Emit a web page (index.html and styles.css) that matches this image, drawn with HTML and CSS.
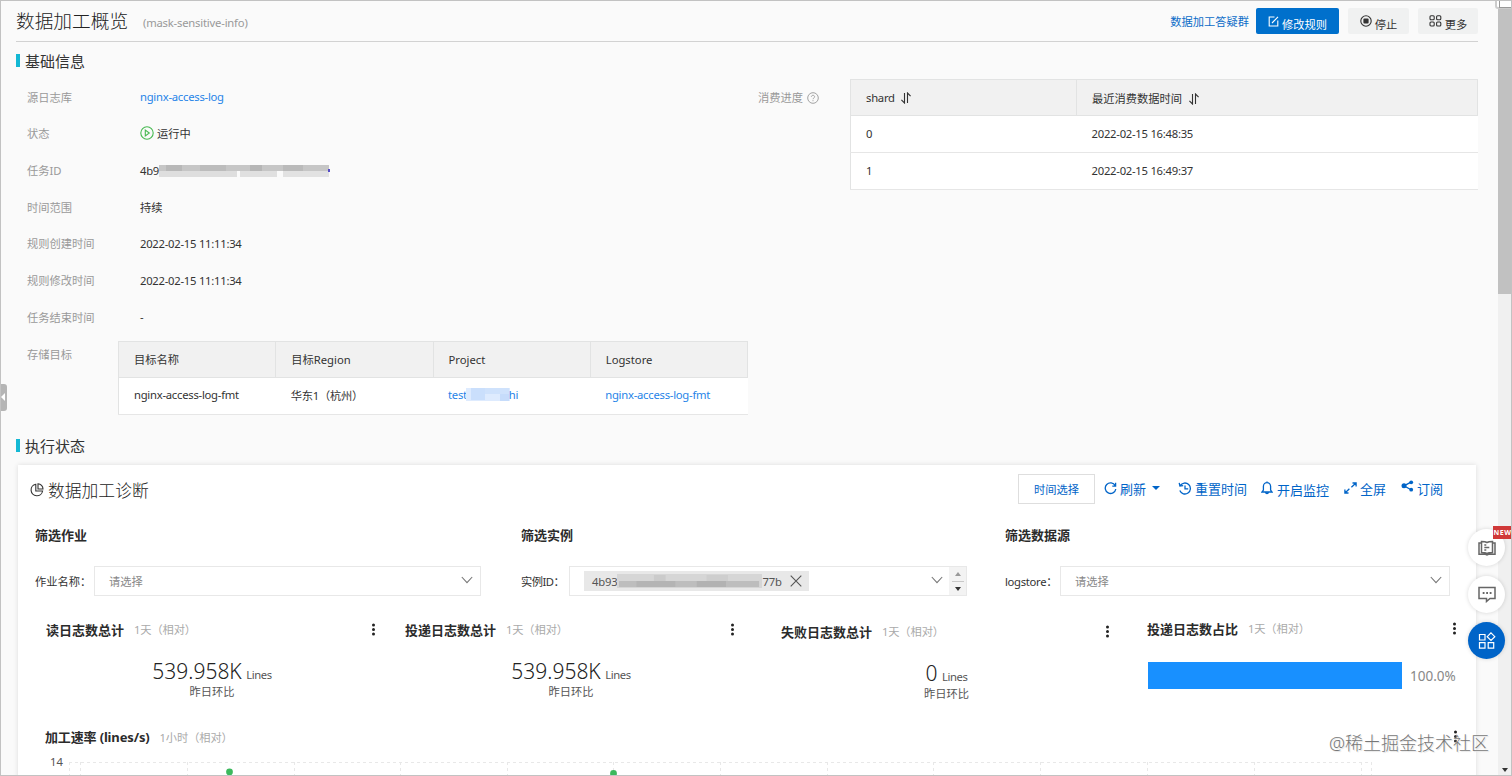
FILE: index.html
```html
<!DOCTYPE html>
<html lang="zh-CN">
<head>
    <meta charset="UTF-8">
    <meta name="viewport" content="width=device-width, initial-scale=1.0">
    <title>数据加工概览</title>
    <link rel="stylesheet" href="styles.css">
</head>
<body>
<div class="window">
    <main class="page">
        <header class="page-header">
            <h1>数据加工概览</h1>
            <span class="job-name">(mask-sensitive-info)</span>
            <a class="help-link">数据加工答疑群</a>
            <button class="btn btn-primary">
                <svg width="11" height="11" viewBox="0 0 11 11"><path d="M6.5 1H1.2v9h8.6V4.5M4 7l6-6.2"/></svg><span>修改规则</span>
            </button>
            <button class="btn btn-stop">
                <svg width="12" height="12" viewBox="0 0 12 12"><circle cx="6" cy="6" r="5.2"/><rect class="solid" x="3.4" y="3.4" width="5.2" height="5.2" rx="1"/></svg><span>停止</span>
            </button>
            <button class="btn btn-more">
                <svg width="13" height="12" viewBox="0 0 13 12"><rect x="1" y=".8" width="4.2" height="4" rx="1"/><rect x="7.6" y=".8" width="4.2" height="4" rx="1"/><rect x="1" y="7" width="4.2" height="4" rx="1"/><rect x="7.6" y="7" width="4.2" height="4" rx="1"/></svg><span>更多</span>
            </button>
        </header>

        <h2 class="section-title">基础信息</h2>
        <div class="info">
            <div class="info-left">
                <div class="info-row"><label>源日志库</label><a class="latin">nginx-access-log</a></div>
                <div class="info-row"><label>状态</label>
                    <svg class="run-icon" width="14" height="14" viewBox="0 0 14 14"><circle cx="7" cy="7" r="6.2"/><path d="M5.3 4v6l4-3z"/></svg><span>运行中</span>
                </div>
                <div class="info-row"><label>任务ID</label><span class="latin">4b9</span>
                    <svg class="mosaic" width="171" height="14" viewBox="0 0 171 14">
                        <rect x="0" y="1" width="170" height="6" fill="#c6c6c6"/>
                        <rect x="7" y="1" width="16" height="6" fill="#b8b8b8"/><rect x="41" y="1" width="26" height="6" fill="#bcbcbc"/><rect x="91" y="1" width="12" height="6" fill="#b6b6b6"/><rect x="124" y="1" width="20" height="6" fill="#bababa"/>
                        <rect x="0" y="7" width="78" height="6" fill="#dedede"/><rect x="81" y="7" width="37" height="6" fill="#e0e0e0"/><rect x="124" y="7" width="46" height="6" fill="#e2e2e2"/>
                        <rect x="169" y="5" width="2" height="3" fill="#554cc8"/>
                    </svg>
                </div>
                <div class="info-row"><label>时间范围</label><span>持续</span></div>
                <div class="info-row"><label>规则创建时间</label><span class="latin">2022-02-15 11:11:34</span></div>
                <div class="info-row"><label>规则修改时间</label><span class="latin">2022-02-15 11:11:34</span></div>
                <div class="info-row"><label>任务结束时间</label><span>-</span></div>
                <div class="info-row target-row"><label>存储目标</label>
                    <table class="table target-table">
                        <tr><th>目标名称</th><th>目标Region</th><th>Project</th><th>Logstore</th></tr>
                        <tr>
                            <td>nginx-access-log-fmt</td><td>华东1（杭州）</td>
                            <td><a class="masked">test<svg width="44" height="13" viewBox="0 0 44 13"><rect width="44" height="13" fill="#deebfe"/><rect x="5" width="14" height="12" fill="#cadffc"/><rect x="19" width="24" height="6" fill="#cfe2fc"/><rect x="34" y="6" width="9" height="7" fill="#c6dcfb"/></svg>hi</a></td>
                            <td><a>nginx-access-log-fmt</a></td>
                        </tr>
                    </table>
                </div>
            </div>
            <div class="info-right">
                <label>消费进度</label>
                <svg class="question" width="12" height="12" viewBox="0 0 12 12"><circle cx="6" cy="6" r="5.3"/><path d="M4.4 4.8c0-2 3.2-2 3.2 0 0 1.2-1.6 1.2-1.6 2.4M6 8.2v1"/></svg>
                <table class="table shard-table">
                    <tr>
                        <th>shard <svg class="sort" width="12" height="12" viewBox="0 0 12 12"><path d="M4.5 1v10L1.4 7.8M7.5 11V1l3.1 3.2"/></svg></th>
                        <th>最近消费数据时间 <svg class="sort" width="12" height="12" viewBox="0 0 12 12"><path d="M4.5 1v10L1.4 7.8M7.5 11V1l3.1 3.2"/></svg></th>
                    </tr>
                    <tr><td>0</td><td>2022-02-15 16:48:35</td></tr>
                    <tr><td>1</td><td>2022-02-15 16:49:37</td></tr>
                </table>
            </div>
        </div>

        <h2 class="section-title status-title">执行状态</h2>
        <section class="card">
            <div class="card-head">
                <svg class="pie" width="14" height="14" viewBox="0 0 14 14"><path d="M5.8 1.3A5.8 5.8 0 1 0 12.6 8H5.8zM8 .8V6h5A5.2 5.2 0 0 0 8 .8z"/></svg>
                <h3>数据加工诊断</h3>
                <button class="time-btn">时间选择</button>
                <a class="tool refresh"><svg width="13" height="13" viewBox="0 0 13 13"><path d="M11.2 3.6A5.3 5.3 0 1 0 11.8 7M11.6.8v3.3H8.3"/></svg>刷新<i class="caret"></i></a>
                <a class="tool reset"><svg width="14" height="13" viewBox="0 0 14 13"><path d="M2.2 3.6A5.5 5.5 0 1 1 1.8 8.6M1.2.9l.7 3.2 3.3-.4M7 3.4v3.5h3.2"/></svg>重置时间</a>
                <a class="tool monitor"><svg width="12" height="14" viewBox="0 0 12 14"><path d="M1 11h10L9.6 9V5.2a3.6 3.6 0 0 0-7.2 0V9zM6 1.4V.4M4.6 11.4c.2 1.6 2.6 1.6 2.8 0"/></svg><span>开启监控</span></a>
                <a class="tool full"><svg width="13" height="12" viewBox="0 0 13 12"><path d="M8.5 1h3.6v3.4M12 1 7.4 5.2M4.5 11H.9V7.6M1 11l4.4-4.2"/></svg>全屏</a>
                <a class="tool subscribe"><svg width="13" height="12" viewBox="0 0 13 12"><path d="m10 2.2-7 3.6 7 4"/><circle class="solid" cx="3" cy="5.8" r="2.5"/><circle class="solid" cx="10.2" cy="2.3" r="1.9"/><circle class="solid" cx="10.2" cy="9.7" r="1.9"/></svg>订阅</a>
            </div>

            <div class="filters">
                <div class="filter">
                    <h4>筛选作业</h4>
                    <div class="field"><label>作业名称：</label>
                        <div class="select"><span>请选择</span><svg class="chev" width="12" height="8" viewBox="0 0 12 8"><path d="m.8 1 5.2 5.6L11.200 1"/></svg></div>
                    </div>
                </div>
                <div class="filter">
                    <h4>筛选实例</h4>
                    <div class="field"><label>实例ID：</label>
                        <div class="select select-tag">
                            <div class="tag"><span>4b93</span>
                                <svg width="145" height="16" viewBox="0 0 149 16" preserveAspectRatio="none">
                                    <rect y="1" width="149" height="14" fill="#d6d6d6"/><rect x="2" y="8" width="144" height="6" fill="#bdbdbd"/><rect x="20" y="8" width="40" height="6" fill="#b4b4b4"/><rect x="38" y="2" width="12" height="6" fill="#cbcbcb"/><rect x="82" y="8" width="30" height="6" fill="#b2b2b2"/><rect x="92" y="2" width="22" height="6" fill="#cecece"/>
                                </svg>
                                <span>77b</span>
                                <svg class="close" width="12" height="12" viewBox="0 0 12 12"><path d="m.7.7 10.600 10.600M11.300.7.7 11.300"/></svg>
                            </div>
                            <svg class="chev" width="12" height="8" viewBox="0 0 12 8"><path d="m.8 1 5.2 5.6L11.200 1"/></svg>
                            <div class="spinner"><i class="up"></i><b></b><i class="down"></i></div>
                        </div>
                    </div>
                </div>
                <div class="filter">
                    <h4>筛选数据源</h4>
                    <div class="field"><label>logstore：</label>
                        <div class="select"><span>请选择</span><svg class="chev" width="12" height="8" viewBox="0 0 12 8"><path d="m.8 1 5.2 5.6L11.200 1"/></svg></div>
                    </div>
                </div>
            </div>

            <div class="metrics">
                <div class="metric">
                    <div class="metric-head"><h4>读日志数总计</h4><span>1天（相对）</span><i class="dots"></i></div>
                    <div class="value">539.958K <small>Lines</small></div>
                    <div class="compare">昨日环比</div>
                </div>
                <div class="metric">
                    <div class="metric-head"><h4>投递日志数总计</h4><span>1天（相对）</span><i class="dots"></i></div>
                    <div class="value">539.958K <small>Lines</small></div>
                    <div class="compare">昨日环比</div>
                </div>
                <div class="metric metric-fail">
                    <div class="metric-head"><h4>失败日志数总计</h4><span>1天（相对）</span><i class="dots"></i></div>
                    <div class="value">0 <small>Lines</small></div>
                    <div class="compare">昨日环比</div>
                </div>
                <div class="metric metric-ratio">
                    <div class="metric-head"><h4>投递日志数占比</h4><span>1天（相对）</span><i class="dots"></i></div>
                    <div class="ratio"><div class="ratio-bar"></div><span>100.0%</span></div>
                </div>
            </div>

            <div class="rate">
                <div class="metric-head"><h4>加工速率 (lines/s)</h4><span>1小时（相对）</span><i class="dots"></i></div>
                <div class="chart">
                    <span>14</span>
                    <svg width="1310" height="28" viewBox="0 0 1310 28">
                        <path class="grid" d="M2 12.500H1305M2.500 12V28M13.500 12V28M120.500 12V28M227.500 12V28M333.500 12V28M440.500 12V28M546.500 12V28M653.500 12V28M760.500 12V28M866.500 12V28M973.500 12V28M1080.500 12V28M1187.500 12V28M1294.500 12V28M1304.500 12V28"/>
                        <circle cx="162.500" cy="22" r="3.400"/><circle cx="546.500" cy="23.500" r="3.400"/>
                    </svg>
                </div>
            </div>
        </section>
    </main>
    <div class="scrollbar"><div class="thumb"></div><i class="down"></i></div>

    <div class="corner"></div>
    <div class="collapse"><i></i></div>
    <div class="float-menu">
        <div class="float-btn">
            <svg width="18" height="16" viewBox="0 0 18 16"><path d="M9 13.500c-1.500-.9-3.500-.9-5.500-.9V1.600c2 0 4 0 5.500.9 1.500-.9 3.500-.9 5.500-.9v11c-2 0-4 0-5.500.9zM3.500 3H1v11.300h6.500L9 15l1.500-.7H17V3h-2.500M6.300 5h2M6.300 7.500h5M6.300 10h2"/></svg>
            <span class="new">NEW</span>
        </div>
        <div class="float-btn">
            <svg width="18" height="17" viewBox="0 0 18 17"><path d="M1 1.500h16v11h-5L8.500 15.500v-3H1z"/><path d="M4.700 7h1.800M8.200 7H10M11.700 7h1.800" stroke-width="2"/></svg>
        </div>
        <div class="float-btn float-active">
            <svg width="18" height="18" viewBox="0 0 18 18"><path d="M1.500 2.500h5.500V8H1.500zM1.500 10.700h5.500v5.500H1.500zM10.200 10.700h5.500v5.500h-5.500zM13 .8l3.800 3.900L13 8.500 9.200 4.700z"/></svg>
        </div>
    </div>
    <div class="watermark">@稀土掘金技术社区</div>
</div>
</body>
</html>
```
FILE: styles.css
```css
* {
    box-sizing: border-box;
}
body {
    margin: 0;
    font-family: "Noto Sans", "Noto Sans CJK SC", sans-serif;
    font-size: 11.25px;
    color: #333;
    background: #fafafa;
}
h1, h2, h3, h4 {
    margin: 0;
    font-weight: normal;
    white-space: nowrap;
}
svg {
    flex: none;
    fill: none;
    stroke: currentColor;
    stroke-width: 1.1;
}
svg .solid {
    fill: currentColor;
    stroke: none;
}
a {
    color: #2684e8;
}
.window {
    position: relative;
    display: flex;
    width: 1512px;
    height: 776px;
    overflow: hidden;
    border: 1px solid #c2c2c2;
}
.page {
    width: 1497px;
    flex: none;
    padding-left: 15px;
    height: 774px;
    overflow: hidden;
}

/* header */
.page-header {
    display: flex;
    align-items: center;
    width: 1462px;
    height: 41px;
    border-bottom: 1px solid #d2d2d2;
}
h1 {
    font-size: 18.7px;
    font-weight: 300;
    width: 127px;
    margin-top: -4px;
    color: #222;
}
.job-name {
    color: #999;
    padding-top: 3px;
    letter-spacing: -0.2px;
}
.help-link {
    margin-left: auto;
    color: #0b6cc8;
}
.btn {
    display: flex;
    align-items: center;
    justify-content: center;
    height: 26px;
    padding: 0;
    border: 0;
    border-radius: 2px;
    background: #f0f1f1;
    color: #333;
    font: inherit;
}
.btn span {
    padding-top: 5px;
    margin-left: 3px;
}
.btn-primary {
    width: 83px;
    margin-left: 7px;
    background: #0070cc;
    color: #fff;
}
.btn-stop {
    width: 61px;
    margin-left: 9px;
}
.btn-more {
    width: 60px;
    margin-left: 9px;
}

.section-title {
    display: flex;
    align-items: center;
    height: 37px;
    font-size: 15px;
}
.section-title::before {
    content: "";
    width: 4px;
    height: 13px;
    margin-right: 5px;
    background: #14b8d4;
}

/* basic info */
.info {
    display: flex;
    height: 347px;
}
.info-left {
    width: 742px;
    padding-left: 11px;
}
.info-row {
    display: flex;
    align-items: center;
    height: 36.65px;
    margin-top: -0.5px;
    margin-bottom: 0.5px;
}
.info-row label {
    width: 113px;
    color: #999;
}
.info-right label {
    color: #999;
}
.latin {
    letter-spacing: -0.25px;
}
.run-icon {
    color: #47b951;
    margin-right: 3px;
}
.mosaic {
    stroke: none;
    margin-top: 2px;
}
.target-row {
    align-items: flex-start;
}
.target-row label {
    width: 91px;
    line-height: 39px;
}
.table {
    border-collapse: collapse;
    table-layout: fixed;
    background: #fff;
    border-left: 1px solid #e2e3e3;
}
.table th, .table td {
    height: 37px;
    padding: 0 0 0 15px;
    text-align: left;
    font-weight: normal;
    letter-spacing: -0.25px;
    border-bottom: 1px solid #e6e6e6;
    white-space: nowrap;
}
.table th {
    height: 36px;
    background: #f1f1f1;
    border: 1px solid #e2e3e3;
    letter-spacing: 0;
}
.table td {
    padding-bottom: 2px;
}
.target-table {
    width: 630px;
    margin-top: 6px;
}
.masked {
    display: flex;
    align-items: center;
}
.masked svg {
    stroke: none;
    margin: 0 -1px;
}
.info-right {
    display: flex;
    align-items: flex-start;
}
.info-right label {
    line-height: 38px;
}
.question {
    margin: 13px 31px 0 4px;
    color: #999;
    stroke-width: 0.9;
}
.shard-table {
    width: 628px;
}
.shard-table th:first-child {
    width: 226px;
    letter-spacing: -0.25px;
}
.sort {
    margin-left: 3px;
    vertical-align: -2px;
}

/* dashboard card */
.status-title {
    height: 39px;
    padding-bottom: 1px;
}
.card {
    width: 1458px;
    height: 330px;
    margin-left: 2px;
    background: #fff;
    box-shadow: 0 0 5px rgba(0, 0, 0, 0.12);
}
.card-head {
    display: flex;
    align-items: center;
    height: 49px;
    padding: 1px 0 0 12px;
}
.pie {
    margin-right: 4px;
}
h3 {
    font-size: 16.8px;
    font-weight: 300;
    color: #222;
}
.time-btn {
    width: 77px;
    height: 30px;
    margin: 0 9px 2px auto;
    padding: 0;
    border: 1px solid #dedede;
    background: #fff;
    color: #0064c8;
    font: inherit;
}
.tool {
    display: flex;
    align-items: center;
    height: 20px;
    margin-bottom: 4px;
    font-size: 13px;
    color: #0064c8;
    white-space: nowrap;
}
.tool svg {
    margin-right: 3px;
    stroke-width: 1.3;
}
.caret {
    margin-left: 6px;
    border: 4px solid transparent;
    border-top-color: #0064c8;
    border-bottom: 0;
}
.refresh {
    width: 74px;
}
.reset {
    width: 83px;
}
.monitor {
    width: 83px;
}
.monitor span {
    padding: 3px 0 0 1px;
}
.full {
    width: 57px;
}
.subscribe {
    width: 75px;
}
.subscribe svg {
    margin-bottom: 4px;
}

h4 {
    font-size: 13px;
    font-weight: bold;
    color: #2b2b2b;
}
.filters {
    display: grid;
    grid-template-columns: 486px 484px 446px;
    height: 96px;
    padding-left: 17px;
}
.filter h4 {
    height: 44px;
    line-height: 43px;
}
.field {
    display: flex;
    align-items: center;
    height: 46px;
}
.field label {
    width: 59px;
    white-space: nowrap;
}
.filter:nth-child(2) label {
    width: 48px;
    letter-spacing: -0.5px;
}
.filter:nth-child(3) label {
    width: 55px;
    letter-spacing: -0.3px;
}
.select {
    display: flex;
    align-items: center;
    justify-content: space-between;
    width: 387px;
    height: 30px;
    padding: 0 7px 0 14px;
    border: 1px solid #e8e8e8;
    color: #888;
}
.filter:nth-child(3) .select {
    width: 390px;
}
.select .chev {
    color: #777;
    margin-bottom: 2px;
}
.filter .select-tag {
    width: 398px;
    padding-right: 0;
}
.tag {
    display: flex;
    align-items: center;
    width: 225px;
    height: 20px;
    padding-left: 8px;
    background: #e8e8e8;
    color: #555;
    letter-spacing: -0.2px;
}
.tag svg:not(.close) {
    stroke: none;
}
.close {
    margin-left: 8px;
}
.select-tag .chev {
    margin-left: auto;
    margin-right: 6px;
}
.spinner {
    display: flex;
    flex-direction: column;
    align-items: center;
    justify-content: space-between;
    width: 17px;
    height: 28px;
    padding: 5px 0 4px;
    background: #f3f3f3;
}
.spinner b {
    width: 12px;
    height: 1px;
    background: #c8c8c8;
}
.up {
    border: 3px solid transparent;
    border-bottom: 4px solid #999;
    border-top: 0;
}
.down {
    border: 3px solid transparent;
    border-top: 4px solid #333;
    border-bottom: 0;
}

/* metrics */
.metrics {
    display: grid;
    grid-template-columns: 332px 332px 331px 312px;
    column-gap: 27px;
    height: 113px;
    padding-left: 28px;
}
.metric-fail {
    margin-left: 17px;
    width: 331px;
    padding-top: 2px;
}
.metric-ratio {
    margin-left: 25px;
    width: 312px;
    margin-top: -1px;
}
.metric-head {
    display: flex;
    align-items: center;
    height: 38px;
}
.metric-head span {
    margin-left: 10px;
    color: #aaa;
    letter-spacing: -0.1px;
}
.metric-head h4 {
    letter-spacing: -0.02px;
}
.dots {
    width: 3px;
    height: 3px;
    margin-left: auto;
    margin-right: 3px;
    border-radius: 50%;
    background: #222;
    box-shadow: 0 -4.500px #222, 0 4.500px #222;
}
.value {
    height: 29px;
    margin-top: 9px;
    line-height: 29px;
    font-size: 21px;
    font-weight: 300;
    text-align: center;
    color: #222;
}
.value small {
    margin-left: -1px;
    font-size: 11.25px;
    font-weight: normal;
    letter-spacing: -0.4px;
    color: #555;
}
.compare {
    line-height: 12px;
    text-align: center;
    color: #555;
}
.ratio {
    display: flex;
    align-items: center;
    height: 27px;
    margin-top: 15px;
}
.ratio-bar {
    width: 254px;
    height: 27px;
    margin: 0 8px 0 1px;
    background: #1890ff;
}
.ratio span {
    font-size: 13.500px;
    color: #888;
}

/* rate chart */
.rate {
    padding-left: 27px;
}
.rate .metric-head {
    width: 1415px;
    height: 27px;
}
.rate h4 {
    letter-spacing: -0.15px;
}
.chart {
    display: flex;
    width: 1340px;
    padding-left: 5px;
}
.chart span {
    width: 17px;
    line-height: 23px;
    color: #555;
}
.chart svg {
    stroke: none;
    fill: #3cb95d;
}
.chart .grid {
    stroke: #e8e8e8;
    stroke-width: 1;
    stroke-dasharray: 3 3;
    fill: none;
}

.scrollbar {
    position: relative;
    display: flex;
    flex-direction: column;
    align-items: center;
    justify-content: space-between;
    width: 13px;
    flex: none;
    height: 774px;
    padding: 7px 0 3px;
    background: #f0f0f0;
}
.thumb {
    width: 13px;
    height: 286px;
    background: #c1c1c1;
}
.corner {
    position: absolute;
    top: -5px;
    right: -4px;
    width: 20px;
    height: 13px;
    border: 2px solid #ccc;
    border-radius: 3px;
    background: #fff;
}
.corner::after {
    content: "";
    display: block;
    width: 13px;
    height: 8px;
    margin-left: 2px;
    border: 1px solid #999;
}
.collapse {
    position: absolute;
    left: -1px;
    top: 383px;
    width: 7px;
    height: 27px;
    padding: 9px 0 0 1px;
    border-radius: 0 3px 3px 0;
    background: #b5b5b5;
}
.collapse i {
    display: block;
    width: 0;
    border: 4px solid transparent;
    border-left: 0;
    border-right-color: #fff;
}
.float-menu {
    position: absolute;
    left: 1467px;
    top: 528px;
    display: flex;
    flex-direction: column;
    gap: 9.500px;
}
.float-btn {
    position: relative;
    display: flex;
    align-items: center;
    justify-content: center;
    width: 37px;
    height: 37px;
    border-radius: 50%;
    background: #fff;
    color: #666;
    box-shadow: 0 0 4px rgba(0, 0, 0, 0.15);
}
.float-btn svg {
    stroke-width: 1.5;
}
.float-active {
    background: #0064c8;
    color: #fff;
}
.float-active svg {
    stroke-width: 1.2;
}
.new {
    position: absolute;
    left: 25px;
    top: -3px;
    width: 19px;
    height: 13px;
    background: #d03838;
    color: #fff;
    font-size: 7px;
    font-weight: bold;
    line-height: 13px;
    text-align: center;
    letter-spacing: 0.5px;
}
.watermark {
    position: absolute;
    left: 1328px;
    top: 729px;
    line-height: 26px;
    font-size: 18px;
    font-weight: 300;
    color: #777;
    text-shadow: 0 0 2px #fff, 1px 1px 1px #ddd;
    white-space: nowrap;
}
```
